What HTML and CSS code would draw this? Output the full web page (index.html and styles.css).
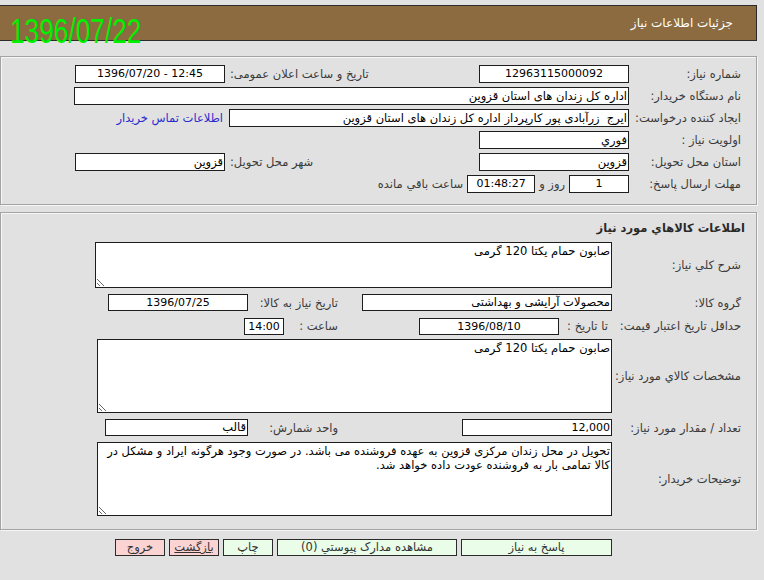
FILE: index.html
```html
<!DOCTYPE html>
<html lang="fa">
<head>
<meta charset="utf-8">
<title>جزئیات اطلاعات نیاز</title>
<link rel="stylesheet" href="styles.css">
</head>
<body>
<div class="page">
  <div class="header">
    <span class="header-title">جزئیات اطلاعات نیاز</span>
    <span class="stamp">1396/07/22</span>
  </div>

  <div class="panel panel-info">
    <div class="row">
      <span class="lbl">شماره نیاز:</span>
      <span class="box w150 ltr">12963115000092</span>
      <span class="side">تاریخ و ساعت اعلان عمومی:</span>
      <span class="box w150 ltr">1396/07/20 - 12:45</span>
    </div>
    <div class="row">
      <span class="lbl">نام دستگاه خریدار:</span>
      <span class="box w554">اداره کل زندان های استان قزوین</span>
    </div>
    <div class="row">
      <span class="lbl">ایجاد کننده درخواست:</span>
      <span class="box w400">ایرج&nbsp; زرآبادی پور کارپرداز اداره کل زندان های استان قزوین</span>
      <a class="link" href="#">اطلاعات تماس خریدار</a>
    </div>
    <div class="row">
      <span class="lbl">اولویت نیاز :</span>
      <span class="box w150">فوري</span>
    </div>
    <div class="row">
      <span class="lbl">استان محل تحویل:</span>
      <span class="box w150">قزوین</span>
      <span class="side">شهر محل تحویل:</span>
      <span class="box w150">قزوین</span>
    </div>
    <div class="row">
      <span class="lbl">مهلت ارسال پاسخ:</span>
      <span class="box w60 ltr">1</span>
      <span class="mid">روز و</span>
      <span class="box w68 ltr">01:48:27</span>
      <span class="mid">ساعت باقي مانده</span>
    </div>
  </div>

  <div class="panel panel-goods">
    <div class="panel-title">اطلاعات کالاهاي مورد نياز</div>
    <div class="row-ta ta1">
      <span class="lbl2">شرح کلي نياز:</span>
      <textarea class="ta ta-a" readonly>صابون حمام یکتا 120 گرمی</textarea>
    </div>
    <div class="row2 r-group">
      <span class="lbl2">گروه کالا:</span>
      <span class="box2 w250">محصولات آرایشی و بهداشتی</span>
      <span class="side2 w114">تاریخ نیاز به کالا:</span>
      <span class="box2 w140 ltr">1396/07/25</span>
    </div>
    <div class="row2 r-price">
      <span class="lbl2">حداقل تاریخ اعتبار قیمت:</span>
      <span class="upto">تا تاریخ :</span>
      <span class="box2 w140 ltr">1396/08/10</span>
      <span class="side2 w135">ساعت :</span>
      <span class="box2 w40 ltr">14:00</span>
    </div>
    <div class="row-ta ta2">
      <span class="lbl2">مشخصات کالاي مورد نياز:</span>
      <textarea class="ta ta-b" readonly>صابون حمام یکتا 120 گرمی</textarea>
    </div>
    <div class="row2 r-count">
      <span class="lbl2">تعداد / مقدار مورد نیاز:</span>
      <span class="box2 w150 ltr-right">12,000</span>
      <span class="side2 w214">واحد شمارش:</span>
      <span class="box2 w143">قالب</span>
    </div>
    <div class="row-ta ta3">
      <span class="lbl2">توضیحات خریدار:</span>
      <textarea class="ta ta-b" readonly>تحویل در محل زندان مرکزی قزوین به عهده فروشنده می باشد. در صورت وجود هرگونه ایراد و مشکل در
کالا تمامی بار به فروشنده عودت داده خواهد شد.</textarea>
    </div>
  </div>

  <div class="buttons">
    <button class="btn green b150" type="button">پاسخ به نیاز</button>
    <button class="btn green b179" type="button">مشاهده مدارک پيوستي (0)</button>
    <button class="btn green b50" type="button">چاپ</button>
    <button class="btn pink b50 under" type="button">بازگشت</button>
    <button class="btn pink b50" type="button">خروج</button>
  </div>
</div>
</body>
</html>
```

FILE: styles.css
```css
* {
  box-sizing: border-box;
}

html,
body {
  margin: 0;
  padding: 0;
}

body {
  width: 764px;
  height: 580px;
  overflow: hidden;
  background: #e1e1e1;
  font-family: "DejaVu Sans", "Noto Sans", sans-serif;
  font-size: 11.5px;
  color: #3a3a3a;
}

.page {
  width: 757px;
  direction: rtl;
  padding-top: 5px;
}

/* header bar */
.header {
  position: relative;
  height: 36px;
  background: #8b6b3f;
  border: 1px solid #2b2b2b;
  border-left: none;
  display: flex;
  align-items: center;
  padding-right: 23px;
}

.header-title {
  color: #ffffff;
  font-size: 12px;
}

.stamp {
  position: absolute;
  left: 10px;
  top: 7px;
  direction: ltr;
  color: #00f000;
  font-family: "Liberation Sans", sans-serif;
  font-size: 35px;
  line-height: 1;
  transform: scaleX(0.75);
  transform-origin: left top;
  white-space: nowrap;
}

/* panels */
.panel {
  border: 1px solid #a3a3a3;
  box-shadow: 1px 1px 0 #f6f6f6, inset 1px 1px 0 #f6f6f6;
  padding-right: 15px;
}

.panel-info {
  margin-top: 15px;
  padding-top: 6px;
  padding-bottom: 9px;
}

.panel-goods {
  margin-top: 7px;
  padding-bottom: 13px;
}

.panel-title {
  height: 29px;
  line-height: 30px;
  margin-right: -4px;
  font-weight: bold;
  font-size: 11.5px;
  color: #2a2a2a;
}

/* rows */
.row {
  display: flex;
  align-items: center;
  height: 22px;
}

.lbl {
  flex: none;
  width: 112px;
  white-space: nowrap;
}

.lbl2 {
  flex: none;
  width: 129px;
  white-space: nowrap;
}

.box,
.box2 {
  flex: none;
  background: #ffffff;
  border: 1px solid #1d1d1d;
  color: #000;
  padding: 0 1px;
  white-space: pre;
  overflow: hidden;
}

.box {
  height: 18px;
  line-height: 16px;
}

.box2 {
  height: 17px;
  line-height: 15px;
}

.ltr {
  direction: ltr;
  text-align: center;
  font-size: 11px;
}

.ltr-right {
  direction: ltr;
  text-align: right;
  font-size: 11px;
}

.w40 { width: 40px; }
.w60 { width: 60px; }
.w68 { width: 68px; }
.w140 { width: 140px; }
.w143 { width: 143px; }
.w150 { width: 150px; }
.w250 { width: 250px; }
.w400 { width: 400px; }
.w554 { width: 555px; }

.side {
  flex: none;
  width: 254px;
  text-align: left;
  padding-left: 5px;
  white-space: nowrap;
}

.side2 {
  flex: none;
  white-space: nowrap;
}

.side2.w114 { width: 114px; padding-right: 24px; }
.side2.w135 { width: 135px; padding-right: 81px; }
.side2.w214 { width: 214px; padding-right: 124px; }

.mid {
  flex: none;
  padding: 0 4px;
  white-space: nowrap;
}

.link {
  flex: none;
  margin-right: 6px;
  color: #2b2bcc;
  text-decoration: none;
  white-space: nowrap;
}

.upto {
  flex: none;
  width: 57px;
  margin-right: -4px;
  white-space: nowrap;
  text-align: center;
}

/* textarea rows */
.row-ta {
  display: flex;
  align-items: center;
}

.row2 {
  display: flex;
  align-items: center;
}

.r-group { margin-top: 6px; height: 17px; }
.r-price { margin-top: 7px; height: 16px; }
.r-count { margin-top: 6px; height: 17px; }
.ta2 { margin-top: 5px; }
.ta3 { margin-top: 6px; }

.ta {
  flex: none;
  margin: 0;
  border: 1px solid #1d1d1d;
  background: #ffffff;
  color: #000;
  font-family: "DejaVu Sans", "Noto Sans", sans-serif;
  font-size: 11.5px;
  line-height: 14px;
  padding: 1px 1px;
  direction: rtl;
  resize: both;
  overflow: hidden;
}

.ta-a {
  width: 517px;
  height: 46px;
}

.ta-b {
  width: 515px;
  height: 74px;
}

/* buttons */
.buttons {
  display: flex;
  gap: 4px;
  margin-top: 9px;
  padding-right: 145px;
}

.btn {
  flex: none;
  height: 17px;
  margin: 0;
  padding: 0;
  border: 1px solid #2b2b2b;
  font-family: "DejaVu Sans", "Noto Sans", sans-serif;
  font-size: 11.5px;
  line-height: 15px;
  color: #333;
  direction: rtl;
}

.green { background: #e9fde9; }
.pink { background: #fbd3d3; }

.b150 { width: 151px; }
.b179 { width: 180px; }
.b50 { width: 50px; }

.under {
  text-decoration: underline;
}
```
